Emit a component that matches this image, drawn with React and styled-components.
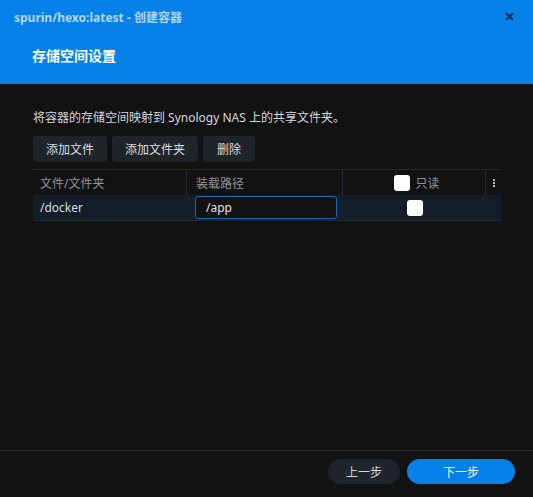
import React, { useState } from 'react'
import styled, { createGlobalStyle } from 'styled-components'

const GlobalStyle = createGlobalStyle`
  body {
    margin: 0;
    background: #121212;
    font-family: "Noto Sans", "Noto Sans CJK SC", sans-serif;
  }
`

const Dialog = styled.div`
  width: 533px;
  height: 497px;
  display: flex;
  flex-direction: column;
  background: #121212;
`

const Header = styled.div`
  height: 84px;
  background: #0681ea;
  display: flex;
  flex-direction: column;
  box-sizing: border-box;
`

const TitleBar = styled.div`
  height: 33px;
  display: flex;
  align-items: center;
  justify-content: space-between;
  padding: 0 19px 0 14px;
`

const Title = styled.div`
  font-size: 12px;
  font-weight: 700;
  color: #b3d5f6;
`

const Close = styled.svg`
  width: 9px;
  height: 9px;
  display: block;
`

const Subtitle = styled.div`
  padding: 12px 0 0 32px;
  font-size: 14px;
  font-weight: 700;
  color: #ffffff;
`

const Body = styled.div`
  flex: 1;
  padding: 26px 32px 0 33px;
  display: flex;
  flex-direction: column;
`

const Desc = styled.div`
  font-size: 12px;
  line-height: 16px;
  color: #d2d8de;
`

const Toolbar = styled.div`
  display: flex;
  gap: 5px;
  margin-top: 10px;
`

const ToolButton = styled.button`
  height: 26px;
  padding: 0 ${p => p.$pad || 13}px;
  border: none;
  border-radius: 3px;
  background: #1f2428;
  color: #d9dee3;
  font-family: inherit;
  font-size: 12px;
`

const Table = styled.div`
  margin-top: 7px;
  border-top: 1px solid #262a2e;
  display: grid;
  grid-template-columns: 154px 156px 143px 15px;
`

const HeadCell = styled.div`
  height: 25px;
  display: flex;
  align-items: center;
  justify-content: ${p => (p.$center ? 'center' : 'flex-start')};
  gap: 5px;
  padding-left: ${p => p.$pad ?? 7}px;
  border-right: ${p => (p.$last ? 'none' : '1px solid #262a2e')};
  font-size: 12px;
  color: #8d939a;
`

const Cell = styled.div`
  height: 25px;
  background: #131e2a;
  border-bottom: 1px solid #1f2933;
  display: flex;
  align-items: center;
  justify-content: ${p => (p.$center ? 'center' : 'flex-start')};
  padding-left: ${p => p.$pad ?? 7}px;
  font-size: 12px;
  color: #d8dde2;
`

const PathInput = styled.input`
  width: 142px;
  height: 23px;
  box-sizing: border-box;
  border: 1px solid #2168b3;
  border-radius: 3px;
  background: #121212;
  color: #e0e4e8;
  font-family: inherit;
  font-size: 12px;
  padding: 0 10px;
  outline: none;
`

const Check = styled.span`
  width: 16px;
  height: 16px;
  border-radius: 3px;
  background: #ffffff;
  display: inline-block;
`

const Dots = styled.div`
  display: flex;
  flex-direction: column;
  gap: 1px;
  align-items: center;
  width: 100%;
  span {
    width: 2px;
    height: 2px;
    background: #b8bec4;
  }
`

const Footer = styled.div`
  height: 47px;
  border-top: 1px solid #242628;
  display: flex;
  justify-content: flex-end;
  align-items: flex-start;
  gap: 7px;
  padding: 8px 18px 0 0;
  box-sizing: border-box;
`

const StepButton = styled.button`
  width: ${p => p.$w}px;
  height: 25px;
  border: none;
  border-radius: 13px;
  background: ${p => (p.$primary ? '#0681ea' : '#1f2529')};
  color: ${p => (p.$primary ? '#ffffff' : '#d5dade')};
  font-family: inherit;
  font-size: 12px;
`

export default function App() {
  const [path, setPath] = useState('/app')

  return (
    <Dialog>
      <GlobalStyle />
      <Header>
        <TitleBar>
          <Title>spurin/hexo:latest - 创建容器</Title>
          <Close viewBox="0 0 10 10">
            <path d="M1 1 L9 9 M9 1 L1 9" stroke="#0f3159" strokeWidth="2.4" />
          </Close>
        </TitleBar>
        <Subtitle>存储空间设置</Subtitle>
      </Header>

      <Body>
        <Desc>将容器的存储空间映射到 Synology NAS 上的共享文件夹。</Desc>
        <Toolbar>
          <ToolButton>添加文件</ToolButton>
          <ToolButton>添加文件夹</ToolButton>
          <ToolButton $pad={14}>删除</ToolButton>
        </Toolbar>

        <Table>
          <HeadCell>文件/文件夹</HeadCell>
          <HeadCell $pad={9}>装载路径</HeadCell>
          <HeadCell $center $pad={6}>
            <Check />
            只读
          </HeadCell>
          <HeadCell $last $center $pad={0}>
            <Dots><span /><span /><span /></Dots>
          </HeadCell>

          <Cell>/docker</Cell>
          <Cell $pad={8}>
            <PathInput value={path} onChange={e => setPath(e.target.value)} />
          </Cell>
          <Cell $center $pad={1}>
            <Check />
          </Cell>
          <Cell />
        </Table>
      </Body>

      <Footer>
        <StepButton $w={72}>上一步</StepButton>
        <StepButton $w={108} $primary>下一步</StepButton>
      </Footer>
    </Dialog>
  )
}
